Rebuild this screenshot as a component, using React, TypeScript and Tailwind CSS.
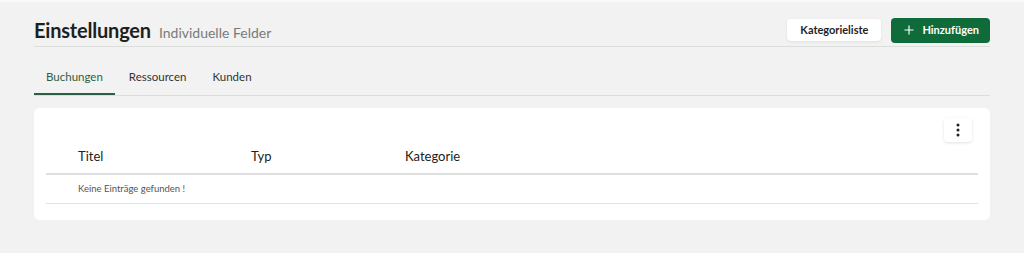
import { Plus } from "lucide-react";

// Settings page — custom fields list, empty state.

const TABS = ["Buchungen", "Ressourcen", "Kunden"];

export default function App() {
  return (
    <main
      className="min-h-[253px] border-t-2 border-[#fafafa] bg-[#f1f2f1] px-[34px] text-[#1f1f1f]"
      style={{ fontFamily: "Lato, 'Noto Sans', sans-serif" }}
    >
      <header className="flex items-center justify-between border-b border-[#dcdedc] pb-[2px] pt-[14px]">
        <div className="flex items-baseline gap-[8px]">
          <h1 className="text-[20px] font-bold leading-[28px] tracking-[-0.2px]">Einstellungen</h1>
          <span className="text-[14px] text-[#7a7a7a]">Individuelle Felder</span>
        </div>
        <div className="flex items-center gap-[10px]">
          <button className="h-[22px] rounded-[4px] bg-white px-[13px] text-[11px] font-bold shadow-[0_1px_3px_rgba(0,0,0,0.08)]">
            Kategorieliste
          </button>
          <button className="flex h-[25px] items-center gap-[6px] rounded-[4px] bg-[#0f6b3a] px-[11px] text-[11px] font-bold text-white">
            <Plus size={14} strokeWidth={2} />
            Hinzufügen
          </button>
        </div>
      </header>

      <nav className="mt-[21px] flex gap-[2px] border-b border-[#dcdedc]">
        {TABS.map((t, i) => (
          <div
            key={t}
            className={`px-3 pb-[8px] text-[11.5px] ${
              i === 0
                ? "border-b-2 border-[#2c5e48] text-[#2c5e48]"
                : "border-b-2 border-transparent text-[#333]"
            }`}
          >
            {t}
          </div>
        ))}
      </nav>

      <section className="mt-[12px] rounded-[6px] bg-white px-3 pb-[16px] pt-[10px]">
        <div className="flex justify-end pr-[6px]">
          <button className="flex h-[24px] w-[28px] items-center justify-center rounded-[4px] bg-white shadow-[0_1px_3px_rgba(0,0,0,0.12)]">
            <svg width="4" height="14" viewBox="0 0 4 14" fill="#222">
              <circle cx="2" cy="2" r="1.5" />
              <circle cx="2" cy="7" r="1.5" />
              <circle cx="2" cy="12" r="1.5" />
            </svg>
          </button>
        </div>
        <div className="grid grid-cols-[173px_154px_1fr] border-b-2 border-[#dedede] pb-[6px] pt-[5px] text-[13px] text-[#222]">
          <div className="pl-[32px]">Titel</div>
          <div className="pl-[32px]">Typ</div>
          <div className="pl-[32px]">Kategorie</div>
        </div>
        <div className="border-b border-[#e3e3e3] py-[7px] pl-[32px] text-[9.5px] text-[#555]">
          Keine Einträge gefunden !
        </div>
      </section>
    </main>
  );
}
